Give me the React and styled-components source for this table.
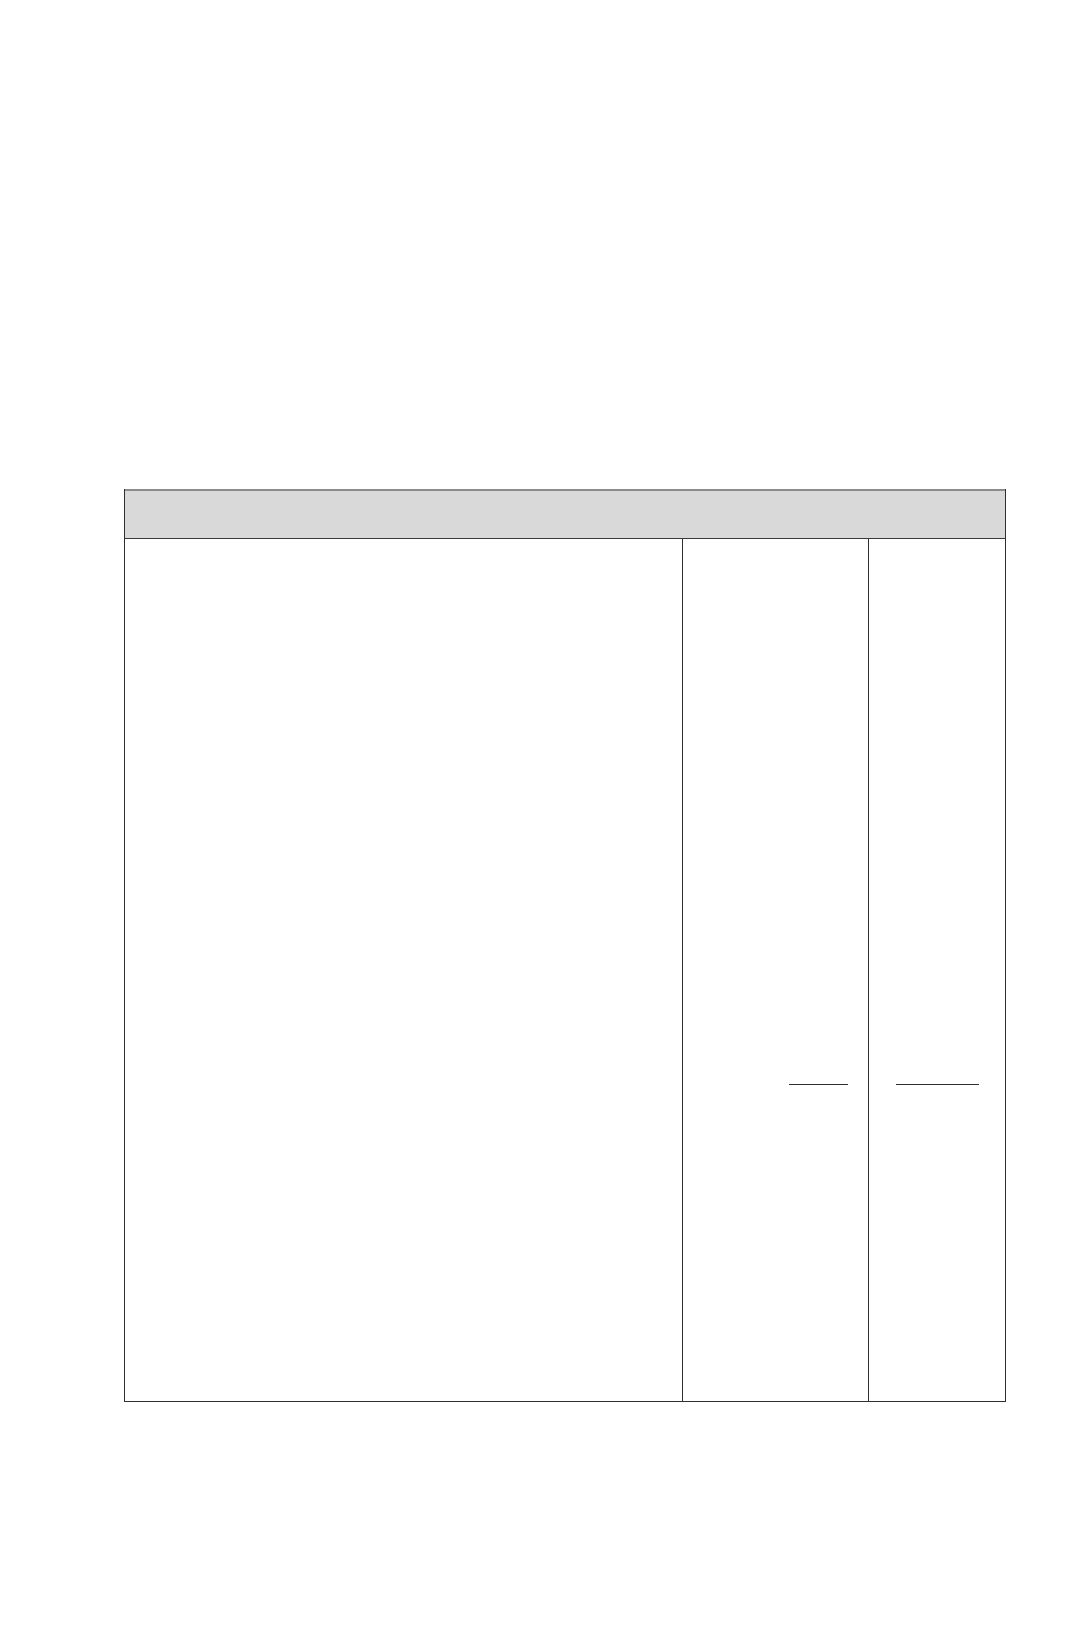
import React from "react";
import styled, { createGlobalStyle } from "styled-components";

const GlobalStyle = createGlobalStyle`
  html, body {
    margin: 0;
    padding: 0;
    background: #ffffff;
    font-family: "Liberation Sans", Arial, sans-serif;
  }
`;

const Page = styled.div`
  width: 1071px;
  min-height: 1638px;
  padding: 489px 65px 0 124px;
  box-sizing: border-box;
`;

const Table = styled.div`
  width: 882px;
  border-left: 1px solid #2f2f2f;
  border-right: 1px solid #2f2f2f;
  border-bottom: 1px solid #2f2f2f;
  box-sizing: border-box;
`;

const HeaderBar = styled.div`
  height: 50px;
  background: #d9d9d9;
  border-top: 2px solid #8c8c8c;
  border-bottom: 1px solid #3a3a3a;
  box-sizing: border-box;
`;

const Body = styled.div`
  display: grid;
  grid-template-columns: 558px 186px 1fr;
  height: 862px;
`;

const Col = styled.div`
  display: flex;
  flex-direction: column;
  align-items: flex-end;
  padding-top: 545px;
  padding-right: ${(p) => p.$pad}px;
  border-right: ${(p) => (p.$last ? "none" : "1px solid #2f2f2f")};
`;

const TotalLine = styled.div`
  width: ${(p) => p.$w}px;
  border-bottom: 1px solid #2f2f2f;
`;

const App = () => {
  return (
    <>
      <GlobalStyle />
      <Page>
        <Table>
          <HeaderBar />
          <Body>
            <Col $pad={0} />
            <Col $pad={20}>
              <TotalLine $w={59} />
            </Col>
            <Col $pad={26} $last>
              <TotalLine $w={83} />
            </Col>
          </Body>
        </Table>
      </Page>
    </>
  );
};

export default App;
